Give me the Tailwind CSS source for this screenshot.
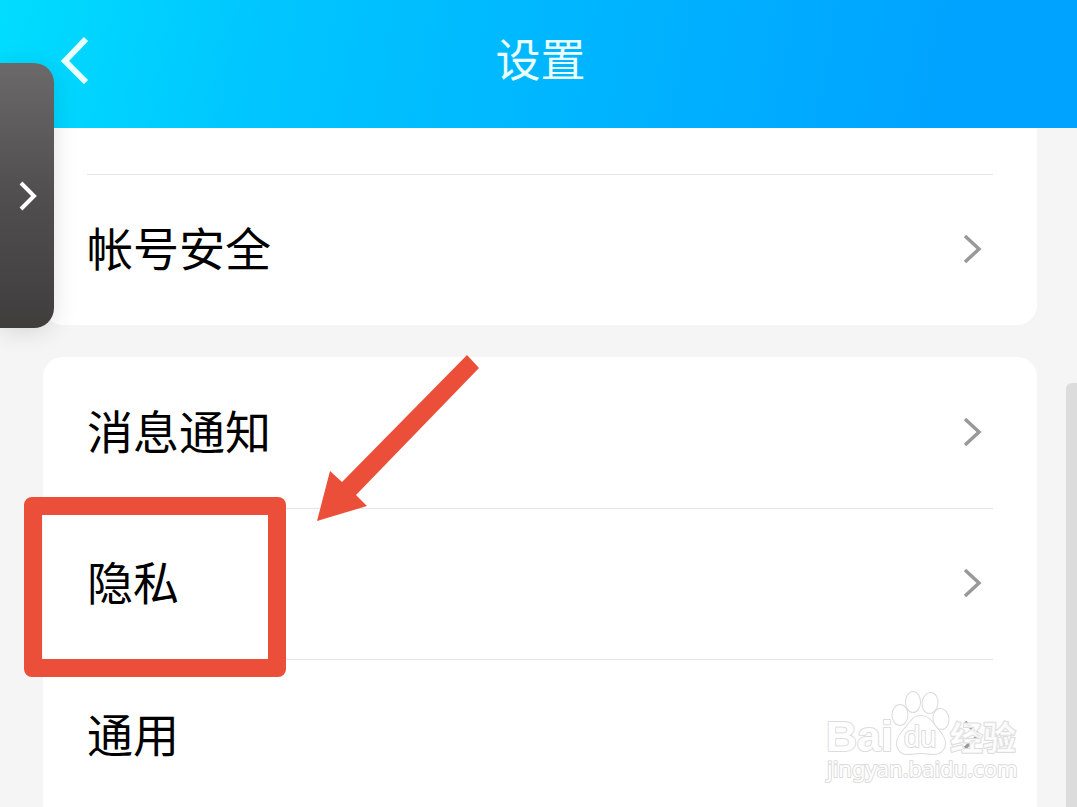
<!doctype html>
<html lang="zh-CN">
<head>
  <meta charset="utf-8">
  <meta name="viewport" content="width=device-width, initial-scale=1">
  <title>设置</title>
  <script src="https://cdn.jsdelivr.net/npm/@tailwindcss/browser@4"></script>
</head>

<body class="relative flex h-screen flex-col overflow-hidden bg-[#f5f5f5] text-black font-['Noto_Sans_CJK_SC',sans-serif]">
  <header class="grid h-32 shrink-0 grid-cols-[1fr_auto_1fr] items-center bg-[linear-gradient(100deg,#00ddff_0%,#00c6ff_24%,#00b6ff_52%,#00a3ff_88%,#00a3ff_100%)] pb-2 text-[#eaffff]">
    <button type="button" aria-label="返回" class="ml-[60px] w-[30px]">
      <svg class="block h-[48px] w-[30px]" viewBox="0 0 30 48" fill="none" stroke="currentColor" stroke-width="6">
        <path d="M26 3 5 25l21 21" />
      </svg>
    </button>
    <h1 class="pb-1 pl-1 text-[45px] leading-[60px]">设置</h1>
  </header>

  <main class="flex flex-1 flex-col gap-8 overflow-hidden pr-10 pl-[43px]">
    <section class="shrink-0 rounded-b-[20px] bg-white px-11">
      <div class="h-[47px] border-b border-[#e5e5e5]"></div>
      <a href="#" class="flex h-[150px] items-center justify-between pb-0.5">
        <span class="pb-1.5 text-[46px] leading-[60px]">帐号安全</span>
        <svg class="mr-[11px] h-[30px] w-[19px]" viewBox="0 0 19 30" fill="none" stroke="#999" stroke-width="3.5"><path d="M2 2l14 13L2 28" /></svg>
      </a>
    </section>

    <nav class="shrink-0 rounded-t-[20px] bg-white px-11">
      <a href="#" class="flex h-[152px] items-center justify-between border-b border-[#e5e5e5] pb-0.5">
        <span class="pb-1.5 text-[46px] leading-[60px]">消息通知</span>
        <svg class="mr-[11px] h-[30px] w-[19px]" viewBox="0 0 19 30" fill="none" stroke="#999" stroke-width="3.5"><path d="M2 2l14 13L2 28" /></svg>
      </a>
      <a href="#" class="flex h-[151px] items-center justify-between border-b border-[#e5e5e5] pb-0.5">
        <span class="pb-1.5 text-[46px] leading-[60px]">隐私</span>
        <svg class="mr-[11px] h-[30px] w-[19px]" viewBox="0 0 19 30" fill="none" stroke="#999" stroke-width="3.5"><path d="M2 2l14 13L2 28" /></svg>
      </a>
      <a href="#" class="flex h-[151px] items-center justify-between pb-0.5">
        <span class="pb-1.5 text-[46px] leading-[60px]">通用</span>
        <svg class="mr-[11px] h-[30px] w-[19px]" viewBox="0 0 19 30" fill="none" stroke="#999" stroke-width="3.5"><path d="M2 2l14 13L2 28" /></svg>
      </a>
    </nav>
  </main>

  <!-- scrollbar thumb -->
  <div class="absolute top-[383px] right-0 bottom-0 w-[11px] rounded-tl-md bg-[#dcdcdc]"></div>

  <!-- side drawer handle -->
  <button type="button" aria-label="展开" class="absolute top-[63px] left-0 flex h-[265px] w-[54px] items-center justify-end rounded-r-[20px] bg-linear-to-b from-[#6b696a] via-[#504e4f] to-[#403e3d] pr-4 text-white shadow-[0_4px_24px_rgba(0,0,0,0.12)]">
    <svg class="h-[30px] w-[19px]" viewBox="0 0 19 30" fill="none" stroke="currentColor" stroke-width="4"><path d="M2 2l13 13L2 28" /></svg>
  </button>

  <!-- highlight box and arrow -->
  <div class="absolute top-[497px] left-[24px] h-[180px] w-[262px] rounded-lg border-[18px] border-[#eb4f3a]"></div>
  <svg class="absolute top-[355px] left-[317px] h-[166px] w-[163px]" viewBox="0 0 163 166" fill="#eb4f3a">
    <path d="M150 0l12 13L39 140l11 11L0 166l13-50 12 11z" />
  </svg>

  <!-- watermark -->
  <svg class="absolute right-[52px] bottom-[20px] h-[100px] w-[205px]" viewBox="0 0 205 100" fill="#fff" stroke="#dcdcdc" stroke-linejoin="round" paint-order="stroke">
    <text x="6" y="64" font-family="Liberation Sans" font-weight="700" font-size="43" stroke-width="2">Bai</text>
    <g stroke-width="2">
      <ellipse cx="80" cy="28" rx="7.500" ry="10" />
      <ellipse cx="93" cy="15" rx="7" ry="10" />
      <ellipse cx="110" cy="16" rx="7.500" ry="10" transform="rotate(8 110 16)" />
      <ellipse cx="121" cy="32" rx="7.500" ry="10" transform="rotate(-8 121 32)" />
      <path d="M101 29c8 0 11 6 15 11s9 10 9 16c0 7-5 11-11 11-5 0-8-1-13-1s-9 1-14 1c-6 0-10-5-10-11 0-7 6-12 10-17s7-10 13-10z" />
    </g>
    <text x="84" y="60" font-family="Liberation Sans" font-size="29" stroke-width="2">du</text>
    <text x="130" y="63" font-family="Noto Sans CJK SC" font-weight="700" font-size="33" fill-opacity=".8" stroke-width="2">经验</text>
    <text x="7" y="90" font-family="Noto Sans" font-size="22" stroke-width="2">jingyan.baidu.com</text>
  </svg>
</body>
</html>
